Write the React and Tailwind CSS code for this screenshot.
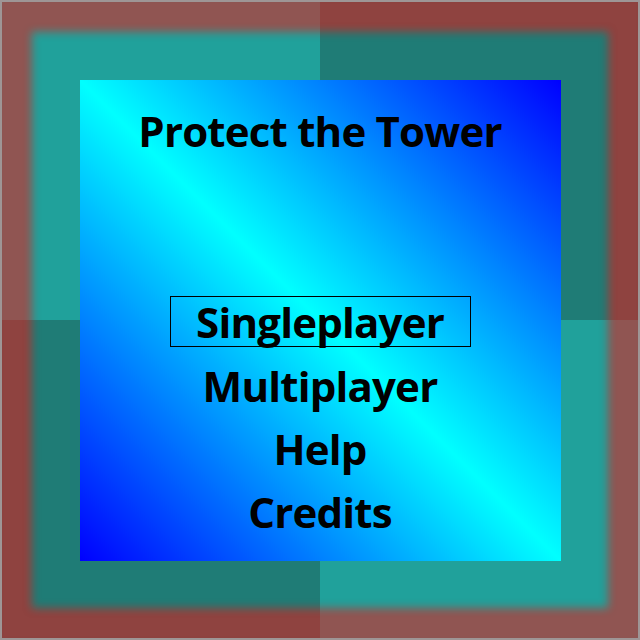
import React from "react";

const FONT = { fontFamily: "'Open Sans', Lato, sans-serif" };

const menu = ["Multiplayer", "Help", "Credits"];

export default function App() {
  return (
    <div
      className="w-[640px] h-[640px] border-2 border-[#9e9696] flex items-center justify-center bg-[conic-gradient(#1f7c76_0_25%,#20a19b_0_50%,#1f7c76_0_75%,#20a19b_0)] shadow-[inset_0_0_8px_30px_rgba(255,10,10,0.5)] [font-variant-ligatures:none]"
      style={FONT}
    >
      {/* menu panel */}
      <div className="w-[481px] h-[481px] flex flex-col items-center bg-[linear-gradient(45deg,#0000ff,#00ffff_50%,#0000ff)] text-black font-bold tracking-[-0.8px]">
        <h1 className="pt-[30px] text-[42px] leading-none">Protect the Tower</h1>

        <div className="mt-[144px] flex flex-col items-center">
          <div className="w-[301px] border border-black pt-[4px] pb-[3px] text-center text-[42px] leading-none">
            Singleplayer
          </div>
          <div className="mt-[7px] flex flex-col items-center">
            {menu.map((m) => (
              <div key={m} className="text-[42px] leading-[63px]">
                {m}
              </div>
            ))}
          </div>
        </div>
      </div>
    </div>
  );
}
